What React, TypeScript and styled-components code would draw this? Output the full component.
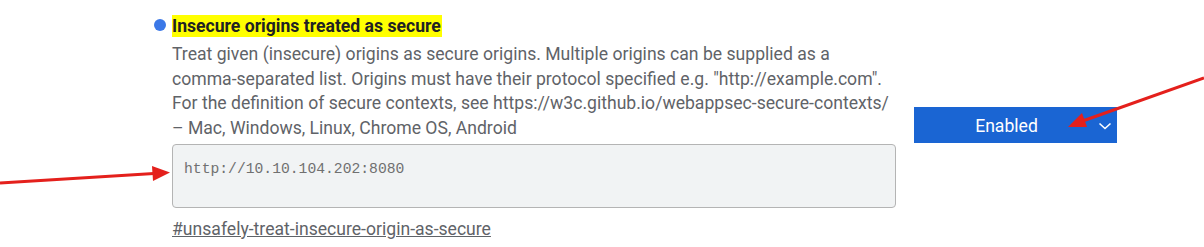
import React from "react";
import styled, { createGlobalStyle } from "styled-components";

const Global = createGlobalStyle`
  html, body { margin: 0; padding: 0; background: #ffffff; }
  body { font-family: Roboto, "Liberation Sans", Arial, sans-serif; }
`;

const Page = styled.div`
  position: relative;
  width: 1204px;
  height: 247px;
  overflow: hidden;
  background: #fff;
`;

const Experiment = styled.div`
  display: flex;
  align-items: flex-start;
  padding: 15px 0 0 154px;
`;

const Dot = styled.span`
  flex: none;
  width: 12px;
  height: 12px;
  border-radius: 50%;
  background: #3b78e7;
  margin-top: 4px;
  margin-right: 6px;
`;

const Body = styled.div`
  width: 724px;
  display: flex;
  flex-direction: column;
`;

const Title = styled.h3`
  margin: 0;
  align-self: flex-start;
  background: #ffff00;
  color: #202124;
  font-size: 17.6px;
  font-weight: 700;
  line-height: 22px;
  padding: 0 1px 0 0;
`;

const Description = styled.p`
  margin: 5px 0 0;
  color: #5f6368;
  font-size: 17.6px;
  line-height: 24.7px;
  white-space: nowrap;
`;

const Origins = styled.textarea`
  box-sizing: border-box;
  margin: 3px 0 0;
  width: 724px;
  height: 64px;
  resize: none;
  background: #f1f3f4;
  border: 1px solid #b4b4b4;
  border-radius: 4px;
  padding: 14px 11px 8px;
  color: #707070;
  font-family: "Liberation Mono", "DejaVu Sans Mono", monospace;
  font-size: 14.7px;
  line-height: 20px;
  outline: none;
`;

const Permalink = styled.a`
  margin-top: 10px;
  align-self: flex-start;
  color: #5f6368;
  font-size: 17.6px;
  line-height: 22px;
  text-decoration: underline;
`;

const Select = styled.div`
  flex: none;
  margin: 92px 0 0 18px;
  width: 203px;
  height: 36px;
  box-sizing: border-box;
  background: #1a65d3;
  color: #ffffff;
  font-size: 17.6px;
  display: flex;
  align-items: center;
  position: relative;
`;

const SelectLabel = styled.span`
  flex: 1;
  text-align: center;
  padding: 2px 18px 0 0;
`;

const Chevron = styled.svg`
  position: absolute;
  right: 5px;
  top: 15px;
`;

const Overlay = styled.svg`
  position: absolute;
  left: 0;
  top: 0;
  pointer-events: none;
`;

export default function App() {
  return (
    <Page>
      <Global />
      <Experiment>
        <Dot />
        <Body>
          <Title>Insecure origins treated as secure</Title>
          <Description>
            Treat given (insecure) origins as secure origins. Multiple origins can be supplied as a
            <br />
            comma-separated list. Origins must have their protocol specified e.g. "http://example.com".
            <br />
            For the definition of secure contexts, see https://w3c.github.io/webappsec-secure-contexts/
            <br />– Mac, Windows, Linux, Chrome OS, Android
          </Description>
          <Origins defaultValue="http://10.10.104.202:8080" />
          <Permalink href="#unsafely-treat-insecure-origin-as-secure">
            #unsafely-treat-insecure-origin-as-secure
          </Permalink>
        </Body>
        <Select>
          <SelectLabel>Enabled</SelectLabel>
          <Chevron width="14" height="8" viewBox="0 0 14 8">
            <path d="M1.5 1.5 L7 6.5 L12.5 1.5" fill="none" stroke="#ffffff" strokeWidth="1.6" />
          </Chevron>
        </Select>
      </Experiment>
      <Overlay width="1204" height="247" viewBox="0 0 1204 247">
        <line x1="0" y1="183" x2="154" y2="173.5" stroke="#e4201c" strokeWidth="3" />
        <polygon points="170,172.5 152,166 153,181" fill="#e4201c" />
        <line x1="1204" y1="78" x2="1084" y2="120.5" stroke="#e4201c" strokeWidth="3" />
        <polygon points="1068,127 1082,113 1087,127" fill="#e4201c" />
      </Overlay>
    </Page>
  );
}
